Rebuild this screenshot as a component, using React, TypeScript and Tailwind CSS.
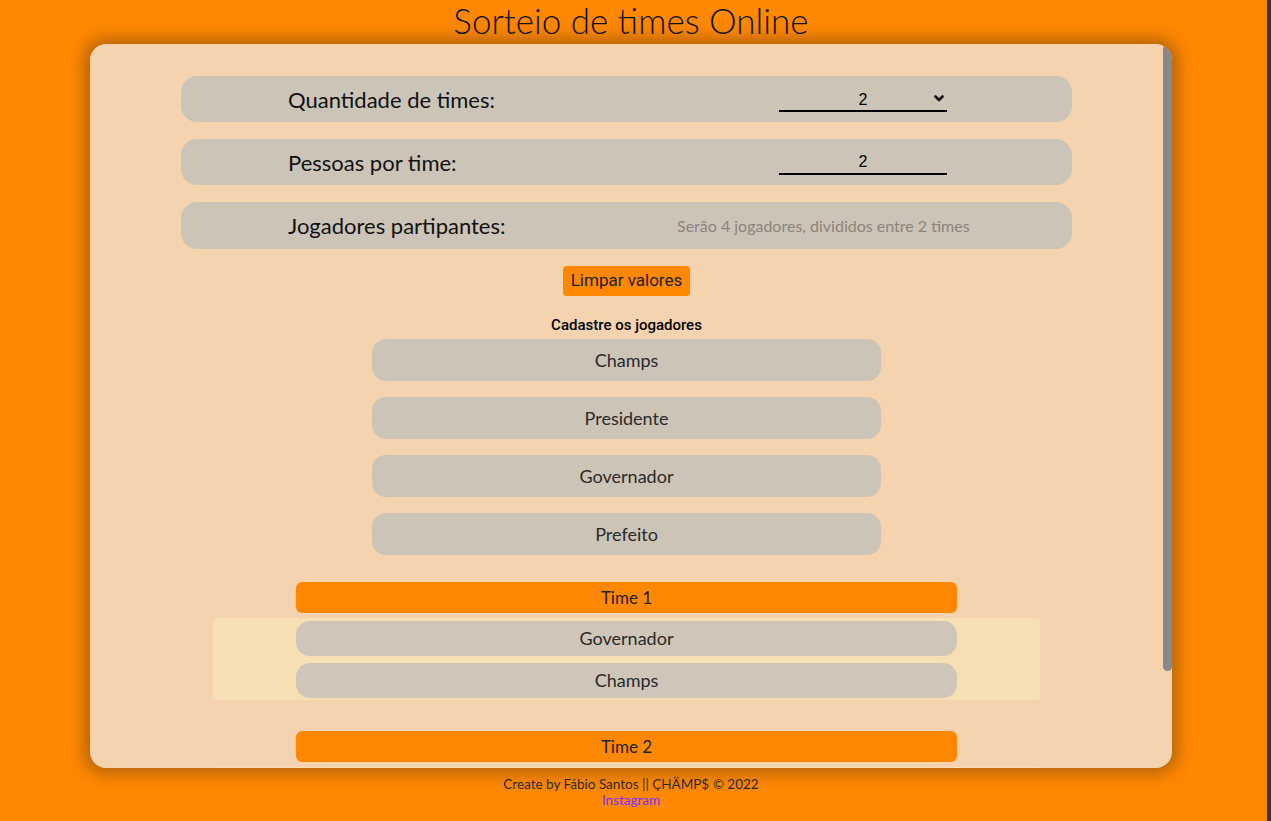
import { useState } from "react";

const players = ["Champs", "Presidente", "Governador", "Prefeito"];

const teams = [
  { name: "Time 1", members: ["Governador", "Champs"] },
  { name: "Time 2", members: ["Presidente", "Prefeito"] },
];

function Chevron() {
  return (
    <svg width="10" height="7" viewBox="0 0 10 7" className="absolute right-[3px] top-[8px] pointer-events-none">
      <polyline points="1.5,1.5 5,5 8.5,1.5" fill="none" stroke="#111" strokeWidth="2.6" strokeLinecap="round" strokeLinejoin="round" />
    </svg>
  );
}

function TeamBlock({ name, members }: { name: string; members: string[] }) {
  return (
    <div className="flex flex-col items-center mb-[31px]">
      <div className="w-[661px] h-[31px] rounded-[6px] bg-[#ff8800] flex items-center justify-center text-[17px] text-[#222]">
        {name}
      </div>
      <div className="mt-[5px] w-[827px] rounded-[4px] bg-[#f5dfb3] pt-[3px] pb-[2px] flex flex-col items-center gap-[7px]">
        {members.map((m) => (
          <div key={m} className="w-[661px] h-[35px] rounded-[14px] bg-[#cfc6b9] flex items-center justify-center text-[18px] text-[#2a2a2a]">
            {m}
          </div>
        ))}
      </div>
    </div>
  );
}

export default function App() {
  const [qtd, setQtd] = useState("2");
  const [pessoas, setPessoas] = useState("2");

  return (
    <div className="flex min-h-screen bg-[#ff8800] font-['Lato','Noto_Sans',sans-serif]">
      <main className="flex-1 flex flex-col items-center pr-[5px]">
        <h1 className="h-[44px] leading-[40px] text-[35px] font-light text-[#111] font-['Lato',sans-serif]">
          Sorteio de times Online
        </h1>

        <div className="w-[1082px] h-[724px] shrink-0 rounded-[16px] bg-[#f5d3ae] shadow-[0_0_16px_6px_rgba(90,55,20,0.45)] flex overflow-hidden">
          <div className="flex-1 overflow-hidden">
            <div className="pt-[32px] flex flex-col items-center">
              <div className="w-[891px] flex flex-col gap-[17px]">
                <div className="h-[46px] rounded-[16px] bg-[#cdc4b8] flex items-center pl-[107px]">
                  <span className="w-[491px] shrink-0 text-[22px] text-[#111]">Quantidade de times:</span>
                  <div className="relative w-[168px]">
                    <select
                      value={qtd}
                      onChange={(e) => setQtd(e.target.value)}
                      className="appearance-none w-full h-[24px] bg-transparent border-0 border-b-2 border-black text-center [text-align-last:center] text-[16px] text-black font-['Liberation_Sans',Arial,sans-serif] outline-none"
                    >
                      <option>2</option>
                      <option>3</option>
                      <option>4</option>
                    </select>
                    <Chevron />
                  </div>
                </div>

                <div className="h-[46px] rounded-[16px] bg-[#cdc4b8] flex items-center pl-[107px]">
                  <span className="w-[491px] shrink-0 text-[22px] text-[#111]">Pessoas por time:</span>
                  <input
                    value={pessoas}
                    onChange={(e) => setPessoas(e.target.value)}
                    className="w-[168px] h-[24px] mt-[2px] bg-transparent border-0 border-b-2 border-black text-center text-[16px] text-black font-['Liberation_Sans',Arial,sans-serif] outline-none"
                  />
                </div>

                <div className="h-[47px] rounded-[16px] bg-[#cdc4b8] flex items-center pl-[107px]">
                  <span className="w-[389px] shrink-0 text-[22px] text-[#111]">Jogadores partipantes:</span>
                  <span className="text-[16px] text-[#8b847b]">Serão 4 jogadores, divididos entre 2 times</span>
                </div>
              </div>

              <button className="mt-[17px] h-[30px] w-[127px] rounded-[4px] bg-[#ff8800] text-[17px] text-[#222] font-['Roboto',sans-serif]">
                Limpar valores
              </button>

              <p className="mt-[19px] h-[20px] leading-[20px] text-[15px] font-medium text-black font-['Roboto',sans-serif]">
                Cadastre os jogadores
              </p>

              <div className="mt-[4px] flex flex-col items-center gap-[16px]">
                {players.map((p) => (
                  <input
                    key={p}
                    readOnly
                    value={p}
                    className="w-[509px] h-[42px] rounded-[14px] bg-[#cdc4b8] text-center text-[18px] text-[#2a2a2a] outline-none"
                  />
                ))}
              </div>

              <div className="mt-[27px]">
                {teams.map((t) => (
                  <TeamBlock key={t.name} name={t.name} members={t.members} />
                ))}
              </div>
            </div>
          </div>
          <div className="w-[9px] shrink-0">
            <div className="h-[627px] rounded-full bg-[#888]" />
          </div>
        </div>

        <footer className="mt-[8px] flex flex-col items-center text-[13.5px] text-[#2a2a2a]">
          <p className="h-[16px] leading-[16px]">Create by Fábio Santos || ÇHÄMP$ © 2022</p>
          <a href="#" className="block h-[16px] leading-[16px] text-[#7b2fff]">Instagram</a>
        </footer>
      </main>
      <div className="w-[4px] bg-[#333]" />
    </div>
  );
}
